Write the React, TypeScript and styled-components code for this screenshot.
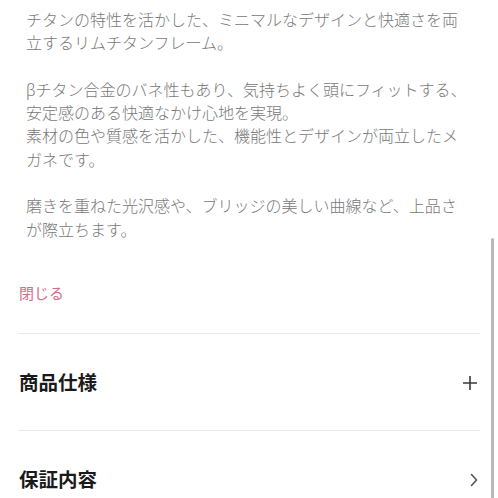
import React from 'react';
import styled, { createGlobalStyle } from 'styled-components';

const GlobalStyle = createGlobalStyle`
  html, body {
    margin: 0;
    padding: 0;
    background: #fff;
  }
  body {
    font-family: "Noto Sans", "Noto Sans CJK JP", sans-serif;
  }
`;

const Page = styled.div`
  position: relative;
  width: 498px;
  height: 498px;
  overflow: hidden;
  padding: 9px 18px 0 19px;
  box-sizing: border-box;
`;

const Description = styled.div`
  padding-left: 7px;
  width: 446px;
  color: #787878;
  font-size: 16px;
  line-height: 23.3px;
  font-weight: 300;

  p {
    margin: 0 0 23.3px;
  }
  p:last-child {
    margin-bottom: 0;
  }
`;

const CloseLink = styled.button`
  display: block;
  margin: 40px 0 0;
  padding: 0;
  border: none;
  background: none;
  color: #d76c8b;
  font-family: inherit;
  font-size: 15px;
  line-height: 22px;
  cursor: pointer;
`;

const Sections = styled.div`
  margin-top: 29px;
`;

const SectionRow = styled.div`
  display: flex;
  align-items: center;
  justify-content: space-between;
  border-top: 1px solid #e6e6e6;
  padding: 35px 2px 33px 0;
`;

const SectionTitle = styled.h3`
  margin: 0;
  font-size: 19.5px;
  line-height: 28px;
  font-weight: 700;
  color: #1a1a1a;
`;

const ScrollThumb = styled.div`
  position: absolute;
  right: 4px;
  top: 238px;
  bottom: 0;
  width: 3px;
  border-radius: 2px 2px 0 0;
  background: #b8b8b8;
`;

const PlusIcon = () => (
  <svg width="16" height="16" viewBox="0 0 16 16" fill="none" stroke="#3a3a3a" strokeWidth="1.6">
    <path d="M8 1v14M1 8h14" />
  </svg>
);

const ChevronIcon = () => (
  <svg width="8" height="14" viewBox="0 0 8 14" fill="none" stroke="#555" strokeWidth="1.6" strokeLinecap="round" strokeLinejoin="round">
    <path d="M1.5 1.5L6.5 7l-5 5.5" />
  </svg>
);

const App: React.FC = () => {
  return (
    <Page>
      <GlobalStyle />
      <Description>
        <p>チタンの特性を活かした、ミニマルなデザインと快適さを両立するリムチタンフレーム。</p>
        <p>
          βチタン合金のバネ性もあり、気持ちよく頭にフィットする、安定感のある快適なかけ心地を実現。
          <br />
          素材の色や質感を活かした、機能性とデザインが両立したメガネです。
        </p>
        <p>磨きを重ねた光沢感や、ブリッジの美しい曲線など、上品さが際立ちます。</p>
      </Description>
      <CloseLink type="button">閉じる</CloseLink>
      <Sections>
        <SectionRow>
          <SectionTitle>商品仕様</SectionTitle>
          <PlusIcon />
        </SectionRow>
        <SectionRow>
          <SectionTitle>保証内容</SectionTitle>
          <ChevronIcon />
        </SectionRow>
      </Sections>
      <ScrollThumb />
    </Page>
  );
};

export default App;
